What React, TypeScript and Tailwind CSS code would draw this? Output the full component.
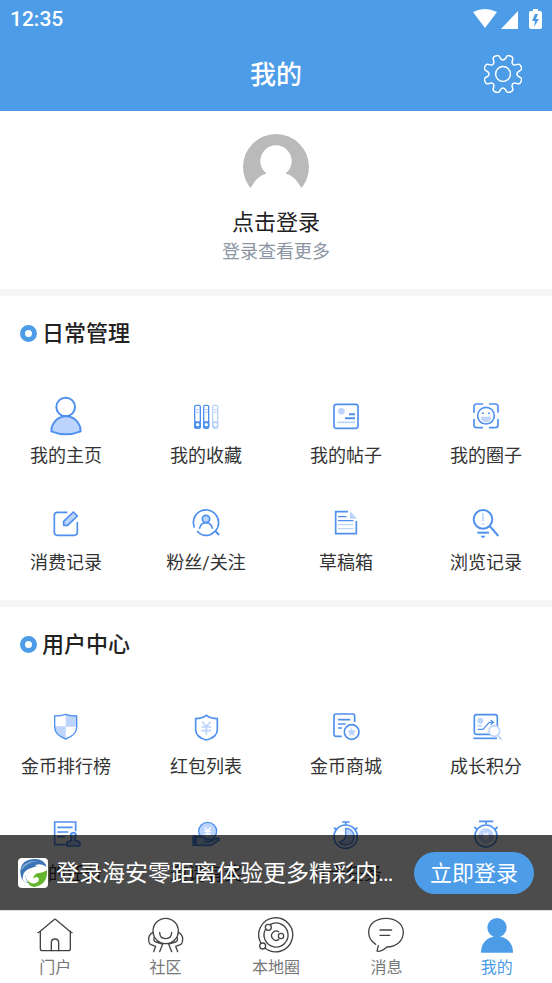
import type { ReactNode } from "react";

const BLUE = "#4f90ee";
const LIGHT = "#bdd4fd";

type MenuItem = { label: string; icon: ReactNode };

function Icon({ children }: { children: ReactNode }) {
  return (
    <svg
      viewBox="0 0 84 84"
      className="size-7 overflow-visible"
      fill="none"
      stroke={BLUE}
      strokeWidth="5"
      aria-hidden="true"
    >
      {children}
    </svg>
  );
}

const DAILY: MenuItem[] = [
  {
    label: "我的主页",
    icon: (
      <svg viewBox="0 0 120 120" className="size-10" fill="none" stroke={BLUE} strokeWidth="6" aria-hidden="true">
        <circle cx="59" cy="33" r="28" />
        <path
          d="M16 106C16 80 36 61 60 61s44 19 44 45Q82 115 60 115T16 106Z"
          fill={LIGHT}
          strokeLinejoin="round"
        />
      </svg>
    ),
  },
  {
    label: "我的收藏",
    icon: (
      <Icon>
        <g strokeWidth="4">
          <rect x="8" y="10" width="17" height="68" rx="4" />
          <path d="M11 23h11M11 31h11" stroke={LIGHT} />
          <path d="M8 60h17v14q0 4-4 4h-9q-4 0-4-4Z" fill={BLUE} />
          <rect x="35" y="10" width="15" height="68" rx="4" />
          <path d="M38 23h10M38 31h10" stroke={LIGHT} />
          <path d="M35 60h15v14q0 4-4 4h-7q-4 0-4-4Z" fill={BLUE} />
          <g stroke={LIGHT}>
            <rect x="62" y="10" width="15" height="68" rx="4" />
            <path d="M65 23h9M65 31h9" />
            <path d="M62 60h15v14q0 4-4 4h-7q-4 0-4-4Z" fill={LIGHT} />
          </g>
        </g>
        <g fill="#fff" stroke="none">
          <circle cx="17" cy="68" r="5" />
          <circle cx="43" cy="68" r="5" />
          <circle cx="70" cy="68" r="5" />
        </g>
      </Icon>
    ),
  },
  {
    label: "我的帖子",
    icon: (
      <Icon>
        <rect x="6" y="7" width="72" height="72" rx="7" />
        <circle cx="28" cy="28" r="10" fill={LIGHT} stroke="none" />
        <path d="M51 37h18M39 49h30" strokeWidth="6" />
        <path d="M16 61h53" stroke={LIGHT} />
      </Icon>
    ),
  },
  {
    label: "我的圈子",
    icon: (
      <Icon>
        <path d="M33 6H14Q6 6 6 14v18M51 6h19q8 0 8 8v18M78 51v18q0 8-8 8H51M33 77H14q-8 0-8-8V51" />
        <circle cx="42" cy="41" r="25" />
        <g stroke="none">
          <circle cx="33" cy="34" r="3" fill={BLUE} />
          <circle cx="51" cy="34" r="3" fill={BLUE} />
          <path d="M26 44h32q-2 17-16 17T26 44Z" fill={LIGHT} />
        </g>
      </Icon>
    ),
  },
  {
    label: "消费记录",
    icon: (
      <Icon>
        <path d="M46 10H16Q7 10 7 19v51q0 9 9 9h51q9 0 9-9V39" />
        <path d="M35 49V37l29-28 12 12-29 28Z" fill={LIGHT} strokeLinejoin="round" />
      </Icon>
    ),
  },
  {
    label: "粉丝/关注",
    icon: (
      <Icon>
        <path d="M7 56A38 38 0 1 1 71 65q-8 8-16 12-23 8-40-11" />
        <path d="m69 65 12 13" strokeWidth="6" />
        <circle cx="42" cy="30" r="11" fill={LIGHT} />
        <path d="M22 59q5-18 20-18t20 18" />
      </Icon>
    ),
  },
  {
    label: "草稿箱",
    icon: (
      <Icon>
        <path d="M48 8H11v66h62V36" />
        <path d="M54 6v23h21Z" fill={LIGHT} stroke="none" />
        <path d="M18 23h26M18 35h46" strokeWidth="4" />
        <path d="M18 47h46M18 59h46" strokeWidth="4" stroke={LIGHT} />
      </Icon>
    ),
  },
  {
    label: "浏览记录",
    icon: (
      <Icon>
        <circle cx="33" cy="31" r="28" strokeWidth="6" />
        <path d="m52 50 27 31" strokeWidth="6" />
        <path d="M33 13v24M33 43v5" stroke={LIGHT} />
        <path d="M16 71h35" strokeWidth="6" />
        <path d="M26 80h14l-4 6h-6Z" fill={BLUE} stroke="none" />
      </Icon>
    ),
  },
];

const USER_CENTER: MenuItem[] = [
  {
    label: "金币排行榜",
    icon: (
      <Icon>
        <g fill={LIGHT} stroke="none">
          <path d="M41 3q14 6 34 6v32H41Z" />
          <path d="M7 40h34v38Q7 66 7 40Z" />
        </g>
        <path d="M41 4q14 5 33 5v33q0 24-33 36Q8 66 8 42V9q19 0 33-5Z" strokeWidth="4" />
      </Icon>
    ),
  },
  {
    label: "红包列表",
    icon: (
      <Icon>
        <path d="M43 7q12 9 33 10v33q0 22-33 31Q11 72 11 50V17q20-1 32-10Z" />
        <path d="m31 26 12 15 12-15M43 41v24M28 42h30M28 53h30" stroke={LIGHT} />
      </Icon>
    ),
  },
  {
    label: "金币商城",
    icon: (
      <Icon>
        <path d="M68 27V9q0-6-6-6H12Q6 3 6 9v54q0 7 6 7h17" />
        <path d="M18 20h37M18 33h23M18 45h12" />
        <circle cx="59" cy="57" r="22" />
        <path d="m59 44 4 8 9 1-6 7 1 9-8-4-8 4 1-9-6-7 9-1Z" fill={LIGHT} stroke="none" />
      </Icon>
    ),
  },
  {
    label: "成长积分",
    icon: (
      <Icon>
        <rect x="7" y="5" width="69" height="59" rx="7" />
        <path d="M4 76h71" />
        <circle cx="25" cy="23" r="9" fill={LIGHT} stroke="none" />
        <path d="M16 38h14" stroke={LIGHT} />
        <path d="M17 49h16l19-21h10M56 21l8 7-8 7" strokeWidth="4" />
        <circle cx="67" cy="54" r="16" fill="#fff" stroke={LIGHT} />
        <path d="m77 67 12 13" stroke={LIGHT} />
      </Icon>
    ),
  },
  {
    label: "我的任务",
    icon: (
      <Icon>
        <path d="M71 34V6H8v68h32" />
        <path d="M16 22h46M16 36h33M16 50h23" />
        <path
          d="M58 52q-6-14 6-14t6 14v10q13 2 14 9v7H44v-7q1-7 14-9Z"
          fill={LIGHT}
          strokeLinejoin="round"
        />
      </Icon>
    ),
  },
  {
    label: "邀请有奖",
    icon: (
      <Icon>
        <circle cx="47" cy="34" r="27" fill={LIGHT} strokeWidth="4" />
        <path d="m38 22 9 11 9-11M47 33v17M37 34h20M37 42h20" stroke="#fff" strokeWidth="4" />
        <path d="M1 46h14v32H1Z" fill={BLUE} stroke="none" />
        <path
          d="M15 50h15l13 8h12q5 6-3 7H37h15l24-11q7 0 5 6L58 76H15"
          fill={LIGHT}
          strokeLinejoin="round"
        />
      </Icon>
    ),
  },
  {
    label: "打卡任务",
    icon: (
      <Icon>
        <circle cx="41" cy="50" r="35" />
        <path d="M30 6h23M41 6v9M6 23l8 7M76 23l-8 7" />
        <path d="M41 25a25 25 0 1 1-19 41q19-5 19-22Z" fill={LIGHT} strokeWidth="4" />
      </Icon>
    ),
  },
  {
    label: "签到任务",
    icon: (
      <Icon>
        <circle cx="42" cy="48" r="33" />
        <path d="M21 4h43M42 4v9M7 21l8 7M77 21l-8 7" />
        <circle cx="42" cy="48" r="23" fill={LIGHT} stroke="none" />
        <path d="m35 38 7 9 7-9M42 47v14M33 48h18M34 54h16" stroke="#fff" strokeWidth="4" />
      </Icon>
    ),
  },
];

const TABS: MenuItem[] = [
  {
    label: "门户",
    icon: (
      <>
        <path d="M3 47 7 45 51 8q3-3 6 0l44 37 4 2" />
        <path d="M10 43v52q0 6 6 6h78q6 0 6-6V43" />
        <path d="M43 101V77q0-11 11-11t11 11v24" />
      </>
    ),
  },
  {
    label: "社区",
    icon: (
      <>
        <circle cx="53" cy="42" r="38" />
        <path d="M35 46q0 19 18 19t18-19" />
        <path d="M15 46Q2 52 2 66t7 17l14 5-6 16M18 62q-2 11 6 13l20 6-9 23" />
        <path d="M91 46q13 6 13 20t-7 17l-14 5 6 16M88 62q2 11-6 13l-20 6 9 23" />
      </>
    ),
  },
  {
    label: "本地圈",
    icon: (
      <>
        <path d="M21 93A51 51 0 1 0 9 79" />
        <path d="M36 23A36 36 0 1 1 23 36" />
        <circle cx="14" cy="87" r="9" />
        <circle cx="31" cy="31" r="9" />
        <path d="M62 44a14 14 0 1 0 0 24" />
        <circle cx="69" cy="57" r="8" />
      </>
    ),
  },
  {
    label: "消息",
    icon: (
      <>
        <path d="M23 82Q2 69 2 46C2 20 25 4 54 4s52 17 52 42-20 43-49 44Q42 103 29 103q-3 0-1-5l3-12" />
        <path d="M36 39h35M36 55h29" />
      </>
    ),
  },
  {
    label: "我的",
    icon: (
      <g fill="currentColor" stroke="none">
        <circle cx="54" cy="32" r="29" />
        <path d="M6 107c0-28 16-42 34-47h28c18 5 34 19 34 47Z" />
      </g>
    ),
  },
];

// one gear tooth as [angle, radius] control points, repeated 8 times
const TOOTH = [
  [-7, 14],
  [7, 14],
  [12, 18.6],
  [17, 19.6],
  [28, 19.6],
  [33, 18.6],
];

function gearPath() {
  const pts = Array.from({ length: 8 }, (_, k) =>
    TOOTH.map(([deg, r]) => {
      const a = ((deg + k * 45) * Math.PI) / 180;
      return [19 + r * Math.sin(a), 19 - r * Math.cos(a)];
    }),
  ).flat();
  const mid = (i: number) => {
    const [x1, y1] = pts[i % pts.length];
    const [x2, y2] = pts[(i + 1) % pts.length];
    return `${((x1 + x2) / 2).toFixed(2)} ${((y1 + y2) / 2).toFixed(2)}`;
  };
  const curves = pts.map((_, i) => {
    const [x, y] = pts[(i + 1) % pts.length];
    return `Q${x.toFixed(2)} ${y.toFixed(2)} ${mid(i + 1)}`;
  });
  return `M${mid(0)}${curves.join("")}Z`;
}

function MenuSection({ title, items }: { title: string; items: MenuItem[] }) {
  return (
    <section className="overflow-hidden border-t-[7px] border-[#f5f5f5]">
      <h2 className="flex h-[74px] items-center gap-[5px] px-5 text-[22px] font-medium text-[#222]">
        <span className="size-[17px] rounded-full border-[5px] border-[#4c9ce8]" />
        {title}
      </h2>
      <div className="-mx-1 grid grid-cols-4 pt-4">
        {items.map((item) => (
          <a key={item.label} href="#" className="flex flex-col items-center pt-[10px] pb-[23px]">
            <span className="flex h-10 items-center">{item.icon}</span>
            <span className="mt-[6px] text-lg leading-7 whitespace-nowrap text-[#333]">{item.label}</span>
          </a>
        ))}
      </div>
    </section>
  );
}

function StatusBar() {
  return (
    <div className="flex h-[37px] items-center justify-between px-[10px] text-[21px] font-medium">
      <span className="pt-[2px]">12:35</span>
      <svg viewBox="0 0 70 22" className="h-[22px] w-[70px]" fill="#fff" aria-hidden="true">
        <path d="M1 4Q13-2 25 4L13 20Z" />
        <path d="M46 3v18H29Z" />
        <path
          d="M61 1h5v2h2q2 0 2 2v14q0 2-2 2h-9q-2 0-2-2V5q0-2 2-2h2Zm2 5-3 7h3l-1 6 5-8h-3l2-5Z"
          fillRule="evenodd"
        />
      </svg>
    </div>
  );
}

export default function App() {
  return (
    <div className="flex h-screen flex-col overflow-hidden bg-white font-[Roboto,'Noto_Sans_CJK_SC',sans-serif]">
      <header className="shrink-0 bg-[#4c9ce8] text-white">
        <StatusBar />
        <div className="grid h-[74px] grid-cols-[1fr_auto_1fr] items-center px-[30px]">
          <h1 className="col-start-2 pt-[2px] text-[26px] font-medium">我的</h1>
          <button type="button" aria-label="设置" className="justify-self-end">
            <svg viewBox="0 0 38 38" className="size-[38px]" fill="none" stroke="#fff" strokeWidth="1.5" aria-hidden="true">
              <circle cx="19" cy="19" r="7.4" />
              <path d={gearPath()} />
            </svg>
          </button>
        </div>
      </header>

      <div className="relative min-h-0 flex-1">
        <main className="h-full overflow-y-auto [scrollbar-width:none]">
          <a href="#" className="flex flex-col items-center pt-[23px] pb-[23px]">
            <svg viewBox="0 0 198 198" className="size-[66px]" aria-hidden="true">
              <circle cx="99" cy="99" r="99" fill="#b9bab9" />
              <circle cx="99" cy="81" r="47" fill="#fff" />
              <path d="M23 163c10-21 25-39 46-44l4-9h52l4 9c21 5 36 23 46 44h23v35H0v-35Z" fill="#fff" />
            </svg>
            <span className="mt-[9px] text-[22px] leading-7 text-[#222]">点击登录</span>
            <span className="mt-px text-lg leading-7 text-[#8d95a3]">登录查看更多</span>
          </a>
          <MenuSection title="日常管理" items={DAILY} />
          <MenuSection title="用户中心" items={USER_CENTER} />
        </main>

        {/* login prompt floats over the end of the list */}
        <div className="absolute inset-x-0 bottom-0 flex h-[75px] items-center bg-black/70 px-[18px] text-white">
          <svg viewBox="0 0 90 90" className="size-[30px] shrink-0" aria-hidden="true">
            <rect width="90" height="90" rx="12" fill="#fff" />
            <path d="M7 44Q6 4 52 3q26 0 34 24Q68 13 50 23l9 1Q36 28 31 46l-8 2q0 15 8 28Q9 71 7 44Z" fill="#3c75b5" />
            <path d="M10 29Q28 4 60 10 30 12 10 37Z" fill="#7ba7d1" />
            <path d="M14 62Q14 30 56 28 34 34 30 50l-7 2q-1 12 6 22-12-2-15-12Z" fill="#fff" />
            <path d="M87 37q3 43-39 50-19-4-20-22 9 13 23 11 14-4 11-15-7-8-17 1 3-17 20-17 11-1 22-8Z" fill="#65b52f" />
          </svg>
          <p className="mr-[14px] ml-2 min-w-0 flex-1 truncate pt-[3px] text-[23px]">
            登录海安零距离体验更多精彩内容
          </p>
          <button
            type="button"
            className="h-[42px] w-[120px] shrink-0 rounded-full bg-[#4c9ce8] pt-px text-[22px]"
          >
            立即登录
          </button>
        </div>
      </div>

      <nav className="flex h-[73px] shrink-0 border-t border-[#ddd] bg-white">
        {TABS.map((tab) => (
          <a
            key={tab.label}
            href="#"
            aria-current={tab.label === "我的" ? "page" : undefined}
            className="group flex flex-1 flex-col items-center pt-[6px] text-[#444] aria-[current=page]:text-[#4c9ce8]"
          >
            <svg
              viewBox="0 0 108 108"
              className="size-9"
              fill="none"
              stroke="currentColor"
              strokeWidth="4"
              strokeLinecap="round"
              strokeLinejoin="round"
              aria-hidden="true"
            >
              {tab.icon}
            </svg>
            <span className="mt-[3px] text-base leading-6 text-[#777] group-aria-[current=page]:text-[#4c9ce8]">
              {tab.label}
            </span>
          </a>
        ))}
      </nav>
    </div>
  );
}
